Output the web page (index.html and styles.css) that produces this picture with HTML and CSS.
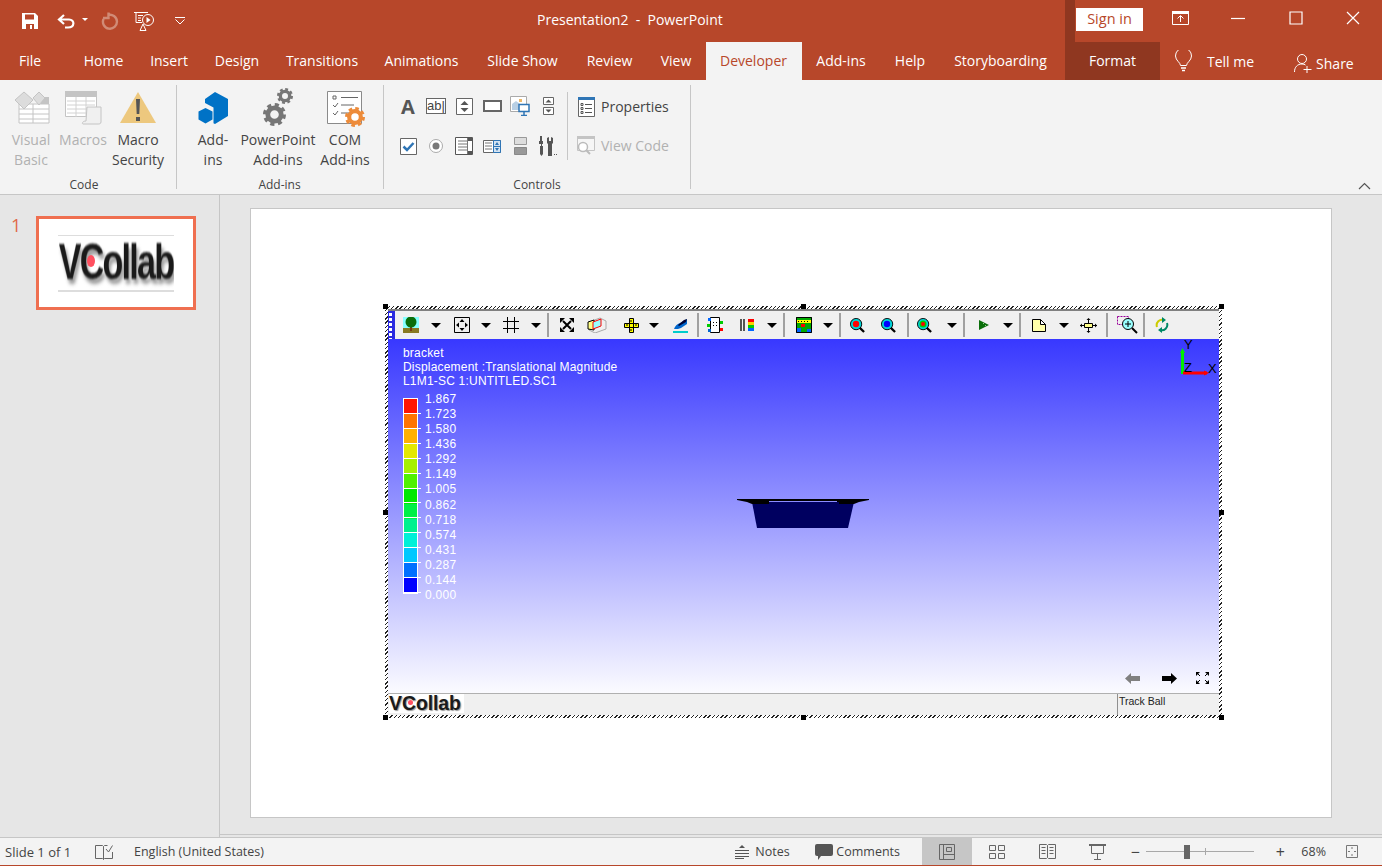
FILE: index.html
```html
<!DOCTYPE html>
<html lang="en">
<head>
    <meta charset="utf-8">
    <title>Presentation2 - PowerPoint</title>
    <meta name="viewport" content="width=device-width, initial-scale=1">
    <link rel="stylesheet" href="styles.css">
</head>
<body>
<svg class="defs" width="0" height="0">
    <symbol id="gear" viewBox="0 0 24 24">
        <circle cx="12" cy="12" r="7" fill="none" stroke="currentColor" stroke-width="5"/>
        <circle cx="12" cy="12" r="10" fill="none" stroke="currentColor" stroke-width="4" stroke-dasharray="4.2 3.65"/>
    </symbol>
    <symbol id="mag" viewBox="0 0 16 16">
        <path d="M10 10l5 5" stroke="#000" stroke-width="2.4"/>
        <circle cx="6.5" cy="6.5" r="6" fill="#00d8d8" stroke="#000"/>
    </symbol>
</svg>

<header class="titlebar">
    <div class="qat">
        <svg class="qat-save" width="16" height="16" viewBox="0 0 16 16"><path fill="#fff" d="M0 0h13l3 3v13H0z"/><path fill="#b7472a" d="M3 1.500h9v5H3zM4 11h8v5H4z"/><path fill="#fff" d="M8 12h2v4H8z"/></svg>
        <svg class="qat-undo" width="19" height="16" viewBox="0 0 19 16"><path fill="none" stroke="#fff" stroke-width="2.200" d="M7 2L2 6.500 7 11M2 6.500h10c6 0 6 8-1 8H8"/></svg>
        <span class="qat-caret"></span>
        <svg class="qat-redo" width="18" height="18" viewBox="0 0 18 18"><path fill="none" stroke="#d18b76" stroke-width="2.400" d="M7 3a7 7 0 1 1-4.500 4M7.500 .500v5.500H2"/></svg>
        <svg class="qat-show" width="21" height="20" viewBox="0 0 21 20"><path fill="none" stroke="#fff" d="M0 1.500h14M2 1.500v10h6M4 4.500h5M4 7h3M4 9.500h3M6 19.500h6M9 13l-3 6.500M9 13l3 6.500"/><circle cx="14" cy="9" r="5.500" fill="none" stroke="#fff"/><path fill="#fff" d="M12.500 6l4 3-4 3z"/></svg>
        <svg class="qat-more" width="10" height="8" viewBox="0 0 10 8"><path fill="none" stroke="#fff" d="M0 .500h10M.500 2.500L5 7l4.500-4.500"/></svg>
    </div>
    <div class="doc-title">Presentation2&nbsp; - &nbsp;PowerPoint</div>
    <button class="signin">Sign in</button>
    <div class="win-btns">
        <svg class="win-ribbon" width="17" height="14" viewBox="0 0 17 14"><path fill="none" stroke="#fff" d="M.500 2.500h16v11H.500zM5.500 7.500L8.500 4.500l3 3M8.500 5v6"/><path fill="#fff" d="M0 0h17v3H0z"/></svg>
        <svg class="win-min" width="14" height="14" viewBox="0 0 14 14"><path stroke="#fff" stroke-width="1.200" d="M0 7.500h14"/></svg>
        <svg class="win-max" width="14" height="14" viewBox="0 0 14 14"><path fill="none" stroke="#fff" stroke-width="1.200" d="M1 1h12v12H1z"/></svg>
        <svg class="win-close" width="14" height="14" viewBox="0 0 14 14"><path stroke="#fff" stroke-width="1.200" d="M1 1l12 12M13 1L1 13"/></svg>
    </div>
</header>

<nav class="tabs">
    <div class="tab-list">
        <span class="tab tab-file">File</span>
        <span class="tab">Home</span>
        <span class="tab">Insert</span>
        <span class="tab">Design</span>
        <span class="tab">Transitions</span>
        <span class="tab">Animations</span>
        <span class="tab">Slide Show</span>
        <span class="tab">Review</span>
        <span class="tab">View</span>
        <span class="tab active">Developer</span>
        <span class="tab">Add-ins</span>
        <span class="tab">Help</span>
        <span class="tab">Storyboarding</span>
    </div>
    <span class="tab-format">Format</span>
    <span class="tellme">
        <svg width="17" height="22" viewBox="0 0 17 22"><path fill="none" stroke="#fff" d="M5.500 15.500c0-3-5-5-5-9.500a8 8 0 0 1 16 0c0 4.500-5 6.500-5 9.500z"/><path stroke="#fff" stroke-width="1.500" d="M6 18h5M7 20.500h3"/></svg>
        <span>Tell me</span>
    </span>
    <span class="share">
        <svg width="18" height="20" viewBox="0 0 18 20"><circle cx="8" cy="6" r="4.500" fill="none" stroke="#fff"/><path fill="none" stroke="#fff" d="M.500 19c0-5 3-8 7.500-8 1.500 0 2.500.4 3.500 1M13 13v7M9.500 16.500h8"/></svg>
        <span>Share</span>
    </span>
</nav>

<section class="ribbon">
    <div class="group group-code">
        <div class="group-body">
            <div class="big-btn btn-vb disabled">
                <div class="big-icon">
                    <svg width="37" height="33" viewBox="0 0 37 33"><path fill="#fff" stroke="#c4c4c4" d="M6 13h30v19H6z"/><path fill="#c4c4c4" d="M28 6h8v7h-8z"/><path stroke="#c4c4c4" d="M6 18h30M6 23h30M6 28h30M20 13v19"/><path fill="#dcdcdc" stroke="#c4c4c4" d="M11 1l9 8-9 9-9-9zM26 1l6 6-6 7-6-7z"/></svg>
                </div>
                <span>Visual<br>Basic</span>
            </div>
            <div class="big-btn btn-macros disabled">
                <div class="big-icon">
                    <svg width="37" height="34" viewBox="0 0 37 34"><path fill="#fff" stroke="#c4c4c4" d="M.500.500h31v25H.500z"/><path fill="#c4c4c4" d="M0 0h32v6H0z"/><path stroke="#d2d2d2" d="M2 10h28M2 14h28M2 18h28M2 22h20M11 6v20M21 6v20"/><path fill="#f0f0f0" stroke="#c4c4c4" d="M22 16h14v15c0 2-2 2-3 2H18c-1 0-1-3 3-3z"/></svg>
                </div>
                <span>Macros</span>
            </div>
            <div class="big-btn btn-security">
                <div class="big-icon">
                    <svg width="36" height="32" viewBox="0 0 36 32"><path fill="#edc87e" d="M18 0l18 31H0z"/><path fill="#555" d="M16 7h4l-.7 15h-2.600zM16 25h4v4h-4z"/></svg>
                </div>
                <span>Macro<br>Security</span>
            </div>
        </div>
        <div class="group-label">Code</div>
    </div>
    <div class="group group-addins">
        <div class="group-body">
            <div class="big-btn btn-addins">
                <div class="big-icon">
                    <svg width="31" height="32" viewBox="0 0 31 32"><path fill="#0072c6" d="M17 0l13 7v17l-13 8-1.500-.8V15.500L7 11V7z"/><path fill="#0072c6" d="M7.500 16l7 3.500v8l-7 4-7-4v-8z"/></svg>
                </div>
                <span>Add-<br>ins</span>
            </div>
            <div class="big-btn btn-ppt">
                <div class="big-icon">
                    <svg class="gear-big" width="23" height="23"><use href="#gear"/></svg>
                    <svg class="gear-small" width="16" height="16"><use href="#gear"/></svg>
                </div>
                <span>PowerPoint<br>Add-ins</span>
            </div>
            <div class="big-btn btn-com">
                <div class="big-icon">
                    <svg width="36" height="33" viewBox="0 0 36 33"><path fill="#fff" stroke="#8a8a8a" d="M.500.500h34v32H.500z"/><path fill="none" stroke="#666" d="M6 5h3v3H6zM14 6.500h17M14 14h13M14 22h8M6 14l2 2 3-4M6 22l2 2 3-4"/></svg>
                    <svg class="gear-orange" width="20" height="20"><use href="#gear"/></svg>
                </div>
                <span>COM<br>Add-ins</span>
            </div>
        </div>
        <div class="group-label">Add-ins</div>
    </div>
    <div class="group group-controls">
        <div class="group-body">
            <div class="ctl-grid">
                <span class="ctl ctl-a">A</span>
                <span class="ctl"><span class="ctl-ab">ab|</span></span>
                <span class="ctl"><svg width="17" height="17" viewBox="0 0 17 17"><path fill="#fff" stroke="#666" d="M.500.500h16v16H.500z"/><path fill="#555" d="M8.500 3l4 4h-8zM8.500 14l-4-4h8z"/></svg></span>
                <span class="ctl"><svg width="19" height="12" viewBox="0 0 19 12"><path fill="#fff" stroke="#666" stroke-width="2" d="M1 1h17v10H1z"/></svg></span>
                <span class="ctl"><svg width="20" height="20" viewBox="0 0 20 20"><path fill="#fff" stroke="#aaa" d="M.500.500h16v15H.500z"/><path fill="#b8cfe4" d="M2 14V8l4-3 4 3v6z"/><path fill="#edb868" d="M9 3h3v3H9z"/><path fill="#fff" stroke="#2f75b5" stroke-width="1.500" d="M9 8.500h10v7H9z"/><path stroke="#2f75b5" stroke-width="1.500" d="M14 16v3M11 19.500h6"/></svg></span>
                <span class="ctl"><svg width="11" height="18" viewBox="0 0 11 18"><path fill="#fff" stroke="#666" d="M.500.500h10v7H.500zM.500 10.500h10v7H.500z"/><path fill="#555" d="M5.500 2.500l3 3h-6zM5.500 15.500l-3-3h6z"/></svg></span>
                <span class="ctl"><svg width="17" height="17" viewBox="0 0 17 17"><path fill="#fff" stroke="#666" d="M.500.500h16v16H.500z"/><path fill="none" stroke="#2f75b5" stroke-width="2.500" d="M3.500 8.500l3.500 3.500 6.500-7"/></svg></span>
                <span class="ctl"><svg width="14" height="14" viewBox="0 0 14 14"><circle cx="7" cy="7" r="6.500" fill="#fff" stroke="#aaa"/><circle cx="7" cy="7" r="3.500" fill="#777"/></svg></span>
                <span class="ctl"><svg width="18" height="18" viewBox="0 0 18 18"><path fill="#fff" stroke="#555" d="M.500.500h17v17H.500z"/><path stroke="#777" d="M3 4h9M3 7h9M3 10h9M3 13h9M12.500 1v16"/><path fill="#555" d="M13 1h4v3h-4zM13 14h4v3h-4z"/></svg></span>
                <span class="ctl"><svg width="18" height="13" viewBox="0 0 18 13"><path fill="#fff" stroke="#666" d="M.500.500h17v12H.500z"/><path stroke="#777" d="M2 3h7M2 6h7M2 9h7"/><path fill="#d6e4f2" stroke="#2f75b5" d="M10.500.500h7v12h-7zM10.500 6.500h7"/><path fill="#2f75b5" d="M14 2l2 3h-4zM14 11l-2-3h4z"/></svg></span>
                <span class="ctl"><svg width="13" height="18" viewBox="0 0 13 18"><path fill="#ddd" stroke="#999" d="M.500.500h12v7H.500z"/><path fill="#999" stroke="#888" d="M.500 10.500h12v7H.500z"/></svg></span>
                <span class="ctl"><svg width="20" height="20" viewBox="0 0 20 20"><path fill="#555" d="M2 0h2v5h1v3H4v2h1v8l-1.500 2L2 18v-8h1V8H1V5h1zM9 2l2-1v4h2V1l2 1v5l-1 1v12h-4V8L9 7z"/><path fill="#555" d="M16 18h1v1h-1zM18 18h1v1h-1z"/></svg></span>
            </div>
            <div class="ctl-side">
                <div class="side-btn">
                    <svg width="19" height="20" viewBox="-1 0 19 20"><path fill="#fff" stroke="#666" d="M.500.500h16v19H.500z"/><path fill="#2f75b5" d="M0 0h17v3H0z"/><path fill="none" stroke="#555" d="M3 6.500h2v2H3zM3 10.500h2v2H3zM3 14.500h2v2H3zM7 7.500h7M7 11.500h7M7 15.500h7"/></svg>
                    <span>Properties</span>
                </div>
                <div class="side-btn disabled">
                    <svg width="19" height="19" viewBox="0 0 19 19"><path fill="#f6f6f6" stroke="#c4c4c4" d="M.500.500h17v14H.500z"/><path fill="#c4c4c4" d="M0 0h18v3H0z"/><circle cx="6" cy="11" r="4.500" fill="#fff" stroke="#bbb" stroke-width="1.500"/><path stroke="#bbb" stroke-width="2" d="M9 14l4 4"/></svg>
                    <span>View Code</span>
                </div>
            </div>
        </div>
        <div class="group-label">Controls</div>
    </div>
    <svg class="ribbon-collapse" width="13" height="8" viewBox="0 0 13 8"><path fill="none" stroke="#555" stroke-width="1.200" d="M1 7l5.500-5.500L12 7"/></svg>
</section>

<main class="workspace">
    <aside class="sidebar">
        <span class="slide-num">1</span>
        <div class="thumb">
            <div class="logo logo-thumb">
                <span class="logo-text">VCollab</span>
                <i class="logo-dot"></i>
            </div>
        </div>
    </aside>
    <div class="stage">
        <div class="slide">
            <div class="ole">
                <div class="ole-inner">
                    <div class="viewer-tools">
                        <div class="gripper"></div>
                        <div class="tool-row">
                            <svg width="16" height="16" viewBox="0 0 16 16"><path fill="#8ff" d="M0 0h16v12H0z"/><path fill="#887a22" d="M0 11h16v5H0z"/><path fill="#7a3a12" d="M7 7h2v7H7z"/><circle cx="8" cy="5" r="5.500" fill="#0a6e0a"/></svg>
                            <i class="caret"></i>
                            <svg width="16" height="16" viewBox="0 0 16 16"><path fill="none" stroke="#000" d="M.500.500h15v15H.500z"/><path fill="#000" d="M8 2l2.500 3h-5zM8 14l-2.500-3h5zM2 8l3-2.500v5zM14 8l-3 2.500v-5z"/></svg>
                            <i class="caret"></i>
                            <svg width="16" height="16" viewBox="0 0 16 16"><path stroke="#000" d="M0 4.500h16M0 11.500h16M4.500 0v16M11.500 0v16"/></svg>
                            <i class="caret"></i>
                            <i class="tool-sep"></i>
                            <svg width="14" height="14" viewBox="0 0 14 14"><path stroke="#000" stroke-width="2" d="M3 3l8 8M11 3l-8 8"/><path fill="#000" d="M0 0h5L0 5zM14 0v5L9 0zM0 14V9l5 5zM14 14H9l5-5z"/></svg>
                            <svg width="20" height="16" viewBox="0 0 20 16"><path fill="none" stroke="#aaa" d="M2 5l11-4 6 3v8l-11 4-6-3z"/><path fill="#ff8" stroke="#000" d="M1 5l6-2v10l-6-1z"/><path fill="#9ff" stroke="#f00" d="M6 5l8-3v7l-8 3z"/></svg>
                            <svg width="15" height="15" viewBox="0 0 15 15"><path fill="#ff0" stroke="#000" d="M.500 5.500h14v4H.500zM5.500.500h4v14h-4z"/><path stroke="#000" d="M3 6v2M12 6v2M6 3h2M6 12h2"/></svg>
                            <i class="caret"></i>
                            <svg width="15" height="15" viewBox="0 0 15 15"><path fill="#06c" d="M1 11c1-3 3-5 6-6l7-4v5l-6 4c-2 1-4 1-7 1z"/><path fill="#003" d="M5 7l6-5 3-1-1 3-7 4z"/><path fill="#0cc" d="M0 13h15v2H0z"/></svg>
                            <i class="tool-sep"></i>
                            <svg width="16" height="16" viewBox="0 0 16 16"><path fill="#fff" stroke="#000" d="M3.500 .500h9v15h-9z"/><path fill="#000" d="M6 5h1v1H6zM9 5h1v1H9zM6 8h1v1H6zM9 8h1v1H9z"/><path fill="#06f" d="M1 1h3v3H1z"/><path fill="#0c0" d="M0 7h3v3H0zM13 4h3v3h-3z"/><path fill="#f00" d="M13 11h3v3h-3z"/><path fill="#06c" d="M1 12h3v3H1z"/></svg>
                            <svg width="16" height="16" viewBox="0 0 16 16"><path stroke="#000" stroke-width="1.300" d="M2 2v12M5 2v12"/><path fill="#f00" d="M9 2h6v3H9z"/><path fill="#fc0" d="M9 5h6v3H9z"/><path fill="#0c0" d="M9 8h6v3H9z"/><path fill="#06f" d="M9 11h6v3H9z"/></svg>
                            <i class="caret"></i>
                            <i class="tool-sep"></i>
                            <svg width="16" height="16" viewBox="0 0 16 16"><path fill="#0a0" d="M0 0h16v16H0z"/><path fill="#06f" d="M0 11h5v5H0zM11 12h5v4h-5z"/><path fill="#ff0" d="M0 3h16v3H0z"/><path fill="#f00" d="M5 7h4v3H5z"/><path fill="#000" d="M2 4h1v1H2zM5 4h1v1H5zM8 4h1v1H8zM11 4h1v1h-1z"/><path fill="none" stroke="#000" d="M.500.500h15v15H.500z"/></svg>
                            <i class="caret"></i>
                            <i class="tool-sep"></i>
                            <svg width="15" height="15"><use href="#mag"/><circle cx="6" cy="6" r="3.200" fill="#f00"/></svg>
                            <svg width="15" height="15"><use href="#mag"/><circle cx="6" cy="6" r="3.200" fill="#00f"/></svg>
                            <i class="tool-sep"></i>
                            <svg width="15" height="15"><use href="#mag"/><circle cx="6" cy="6" r="3.500" fill="#0c0"/><circle cx="6" cy="6" r="2" fill="#f00"/></svg>
                            <i class="caret"></i>
                            <i class="tool-sep"></i>
                            <svg width="10" height="10" viewBox="0 0 10 10"><path fill="#0a6e0a" d="M0 0l10 5-10 5z"/><path fill="#9c9" d="M4 3h1v1H4zM6 5h1v1H6z"/></svg>
                            <i class="caret"></i>
                            <i class="tool-sep"></i>
                            <svg width="14" height="13" viewBox="0 0 14 13"><path fill="#ffa" stroke="#000" d="M.500.500h8l5 5v7H.500z"/><path fill="#fff" stroke="#000" d="M8.500.500v5h5z"/></svg>
                            <i class="caret"></i>
                            <svg width="17" height="15" viewBox="0 0 17 15"><path fill="#ff8" stroke="#000" d="M4.500 5.500h8v4h-8z"/><path stroke="#000" d="M0 7.500h4M13 7.500h4M8.500 1v4M8.500 10v4"/><path fill="#000" d="M8.500 0l2 2h-4zM8.500 15l-2-2h4zM0 7.500l2-2v4zM17 7.500l-2 2v-4z"/></svg>
                            <i class="tool-sep"></i>
                            <svg width="21" height="18" viewBox="0 0 21 18"><path fill="none" stroke="#909" stroke-dasharray="2 1" d="M.500.500h11v8h-11z"/><path stroke="#000" stroke-width="2" d="M15 12l5 5"/><circle cx="11" cy="8" r="5.500" fill="#9ff" stroke="#000"/><path stroke="#000" d="M11 5v6M8 8h6"/></svg>
                            <i class="tool-sep"></i>
                            <svg width="14" height="16" viewBox="0 0 14 16"><path fill="none" stroke="#cc0" stroke-width="2" d="M2 10a5.500 5.500 0 0 1 7-7"/><path fill="none" stroke="#086" stroke-width="2" d="M12 6a5.500 5.500 0 0 1-7 7"/><path fill="#086" d="M7 0l4 3-4 3zM7 10v6l-4-3z"/></svg>
                        </div>
                    </div>
                    <div class="viewer">
                        <div class="viewer-info">
                            <div>bracket</div>
                            <div>Displacement :Translational Magnitude</div>
                            <div>L1M1-SC 1:UNTITLED.SC1</div>
                        </div>
                        <div class="legend">
                            <div class="legend-bar">
                                <i></i><i></i><i></i><i></i><i></i><i></i><i></i><i></i><i></i><i></i><i></i><i></i><i></i>
                            </div>
                            <div class="legend-vals">
                                <span>1.867</span><span>1.723</span><span>1.580</span><span>1.436</span><span>1.292</span><span>1.149</span><span>1.005</span><span>0.862</span><span>0.718</span><span>0.574</span><span>0.431</span><span>0.287</span><span>0.144</span><span>0.000</span>
                            </div>
                        </div>
                        <svg class="triad" width="42" height="42" viewBox="0 0 42 42">
                            <path stroke="#00f000" stroke-width="3" d="M5.500 12v23"/>
                            <path stroke="#f00" stroke-width="3" d="M6 34h24"/>
                            <path fill="#f00" d="M32 34l-5-2.500v5z"/>
                            <path fill="#00f000" d="M5.500 9l-2.500 5h5z"/>
                            <text x="7" y="10">Y</text>
                            <text x="7" y="33">Z</text>
                            <text x="31" y="34">X</text>
                        </svg>
                        <svg class="bracket" width="132" height="29" viewBox="0 0 132 29">
                            <path fill="#000060" d="M15 3h102l-6 26H20z"/>
                            <path fill="#000" d="M0 0h132v1l-5 1-5 1-5 2H102V3H32v2H15l-5-2-5-1-5-1z"/>
                            <path fill="#8c8cff" d="M32 2h68v1H32z"/>
                        </svg>
                        <div class="nav-arrows">
                            <svg class="nav-back" width="15" height="11" viewBox="0 0 15 11"><path fill="#808080" d="M0 5.500L6 0v3h9v5H6v3z"/></svg>
                            <svg width="15" height="11" viewBox="0 0 15 11"><path fill="#000" d="M15 5.500L9 0v3H0v5h9v3z"/></svg>
                            <svg width="13" height="12" viewBox="0 0 13 12"><path fill="#000" d="M0 0h4L0 4zM13 0v4L9 0zM0 12V8l4 4zM13 12H9l4-4z"/><path stroke="#000" d="M1 1l3 3M12 1L9 4M1 11l3-3M12 11L9 8"/></svg>
                        </div>
                    </div>
                    <div class="viewer-status">
                        <div class="logo logo-strip">
                            <span class="logo-text">VCollab</span>
                            <i class="logo-dot"></i>
                        </div>
                        <div class="mode-cell">Track Ball</div>
                    </div>
                </div>
                <i class="handle h-tl"></i><i class="handle h-tc"></i><i class="handle h-tr"></i>
                <i class="handle h-ml"></i><i class="handle h-mr"></i>
                <i class="handle h-bl"></i><i class="handle h-bc"></i><i class="handle h-br"></i>
            </div>
        </div>
    </div>
</main>

<footer class="statusbar">
    <span class="st-slide">Slide 1 of 1</span>
    <svg class="st-proof" width="18" height="16" viewBox="0 0 18 16"><path fill="none" stroke="#666" d="M.500 1.500h7l1 1v13l-1-1h-7zM8.500 2.500l1-1h3M17.500 8v6.500h-8l-1 1M11 5l2.500 3 4-6.500"/></svg>
    <span class="st-lang">English (United States)</span>
    <div class="st-right">
        <span class="st-notes">
            <svg width="14" height="14" viewBox="0 0 14 14"><path fill="#555" d="M7 0l3 3H4z"/><path stroke="#555" d="M0 5.500h14M0 8.500h14M0 11.500h14"/><path stroke="#555" d="M0 13.500h9"/></svg>
            Notes
        </span>
        <span class="st-comments">
            <svg width="18" height="16" viewBox="0 0 18 16"><path fill="#555" d="M2 0h14a2 2 0 0 1 2 2v8a2 2 0 0 1-2 2H6l-3 4v-4H2a2 2 0 0 1-2-2V2a2 2 0 0 1 2-2z"/></svg>
            Comments
        </span>
        <div class="views">
            <span class="view active"><svg width="16" height="16" viewBox="0 0 16 16"><path fill="none" stroke="#666" d="M.500.500h15v15H.500zM4.500.500v15M4.500 10.500h11M7.500 3.500h5v4h-5z"/></svg></span>
            <span class="view"><svg width="16" height="14" viewBox="0 0 16 14"><path fill="none" stroke="#666" d="M.500.500h6v5h-6zM9.500.500h6v5h-6zM.500 8.500h6v5h-6zM9.500 8.500h6v5h-6z"/></svg></span>
            <span class="view"><svg width="17" height="15" viewBox="0 0 17 15"><path fill="none" stroke="#666" d="M.500.500h7l1 1 1-1h7v14h-7l-1-1-1 1h-7zM8.500 1.500v12M2.500 3.500h4M2.500 6.500h4M2.500 9.500h4M10.500 3.500h4M10.500 6.500h4M10.500 9.500h4"/></svg></span>
            <span class="view"><svg width="17" height="16" viewBox="0 0 17 16"><path fill="none" stroke="#666" d="M2.500 1.500v8h12v-8M8.500 9.500v6M5 15.500h7"/><path stroke="#666" stroke-width="2" d="M0 1h17"/></svg></span>
        </div>
        <div class="zoom">
            <span class="zoom-sign">−</span>
            <div class="zoom-track"><i class="zoom-mid"></i><i class="zoom-thumb"></i></div>
            <span class="zoom-sign">+</span>
        </div>
        <span class="st-pct">68%</span>
        <svg class="st-fit" width="12" height="13" viewBox="0 0 12 13"><path fill="none" stroke="#777" d="M.500.500h11v12H.500z"/><path stroke="#777" d="M6 2v2M6 9v2M2 6.500h2M8 6.500h2"/></svg>
    </div>
</footer>
</body>
</html>
```

FILE: styles.css
```css
* {
    box-sizing: border-box;
}

body {
    margin: 0;
    width: 1382px;
    height: 866px;
    overflow: hidden;
    background: #e6e6e6;
    color: #444;
    font-family: "Open Sans", "Liberation Sans", sans-serif;
    font-size: 14px;
}

.defs {
    position: absolute;
}

/* title bar */
.titlebar {
    display: flex;
    align-items: center;
    height: 42px;
    background: #b7472a;
    color: #fff;
}

.qat {
    display: flex;
    align-items: center;
    width: 537px;
    padding-left: 22px;
}

.qat-undo {
    margin-left: 19px;
}

.qat-caret {
    margin-left: 6px;
    border-top: 3px solid #fff;
    border-left: 3px solid transparent;
    border-right: 3px solid transparent;
    margin-bottom: 4px;
}

.qat-redo {
    margin-left: 13px;
}

.qat-show {
    margin-left: 15px;
}

.qat-more {
    margin-left: 20px;
}

.doc-title {
    width: 539px;
    margin-bottom: 4px;
    font-size: 14px;
}

.signin {
    width: 67px;
    height: 23px;
    margin-bottom: 4px;
    padding: 0 0 2px;
    border: 0;
    background: #fff;
    color: #b7472a;
    font: inherit;
    font-size: 14.500px;
}

.win-btns {
    display: flex;
    align-items: center;
    margin-bottom: 6px;
}

.win-ribbon {
    margin-left: 29px;
}

.win-min {
    margin-left: 42px;
}

.win-max {
    margin-left: 44px;
}

.win-close {
    margin-left: 43px;
}

/* tabs */
.tabs {
    display: flex;
    align-items: stretch;
    height: 38px;
    background: #b7472a;
    color: #fff;
    font-size: 14px;
    line-height: 37px;
}

.tab-list {
    display: grid;
    grid-template-columns: 69.500px 68px 63px 73px 97px 102px 100px 74px 59px 96px 79px 59px 122px;
}

.tab {
    text-align: center;
    white-space: nowrap;
}

.tab-file {
    padding-left: 19px;
    text-align: left;
}

.tab.active {
    background: #f3f3f3;
    color: #b7472a;
}

.tab-format {
    position: relative;
    width: 95px;
    margin-left: 3.500px;
    background: #8f3720;
    text-align: center;
}

.tab-format::before {
    content: "";
    position: absolute;
    left: 0;
    top: -42px;
    width: 10px;
    height: 42px;
    background: #8f3720;
}

.tellme {
    display: flex;
    align-items: center;
    margin-left: 15px;
}

.tellme span {
    margin-left: 15px;
}

.share {
    display: flex;
    align-items: center;
    margin-left: 40px;
    padding-top: 4px;
}

.share span {
    margin-left: 4px;
}

/* ribbon */
.ribbon {
    position: relative;
    display: flex;
    height: 115px;
    padding-top: 5px;
    background: #f3f3f3;
    border-bottom: 1px solid #c6c6c6;
}

.group {
    height: 104px;
    border-right: 1px solid #c6c6c6;
}

.group-code {
    width: 177px;
}

.group-addins {
    width: 207px;
    padding-left: 11px;
}

.group-controls {
    width: 307px;
}

.group-body {
    display: flex;
    height: 92px;
}

.group-label {
    height: 12px;
    margin-top: 2px;
    font-size: 12px;
    line-height: 12px;
    text-align: center;
}

.group-code .group-label {
    padding-right: 8px;
}

.group-addins .group-label {
    padding-right: 12px;
}

.big-btn {
    display: flex;
    flex-direction: column;
    align-items: center;
    text-align: center;
    line-height: 20px;
}

.big-btn.disabled,
.side-btn.disabled {
    color: #b1b1b1;
}

.big-icon {
    position: relative;
    display: flex;
    align-items: center;
    justify-content: center;
    width: 100%;
    height: 45px;
}

.btn-vb,
.btn-macros {
    width: 52px;
}

.btn-vb {
    margin-left: 5px;
}

.btn-security {
    width: 58px;
}

.btn-addins {
    width: 50px;
}

.btn-ppt {
    width: 80px;
}

.btn-com {
    width: 54px;
}

.gear-big {
    position: absolute;
    left: 25px;
    top: 18px;
    color: #767676;
}

.gear-small {
    position: absolute;
    left: 39px;
    top: 3px;
    color: #767676;
}

.gear-orange {
    position: absolute;
    left: 27px;
    top: 22px;
    color: #ed8b3a;
}

.ctl-grid {
    display: grid;
    grid-template-columns: repeat(6, 28px);
    grid-auto-rows: 40px;
    width: 178px;
    padding: 1px 0 0 10px;
}

.ctl {
    display: flex;
    align-items: center;
    justify-content: center;
}

.ctl-a {
    font-size: 20px;
    font-weight: 700;
    color: #555;
}

.ctl-ab {
    width: 20px;
    height: 16px;
    border: 1px solid #666;
    background: #fff;
    font-family: "Liberation Sans", sans-serif;
    font-size: 13px;
    line-height: 14px;
    text-align: center;
}

.ctl-side {
    display: flex;
    flex-direction: column;
    justify-content: center;
    height: 68px;
    margin: 7px 0 0 5px;
    padding-left: 9px;
    border-left: 1px solid #c6c6c6;
}

.side-btn {
    display: flex;
    flex-shrink: 0;
    align-items: center;
    height: 39px;
    white-space: nowrap;
}

.side-btn span {
    margin-left: 5px;
}

.ribbon-collapse {
    position: absolute;
    right: 11px;
    bottom: 4px;
}

/* slide area */
.workspace {
    display: flex;
    height: 642px;
}

.sidebar {
    display: flex;
    align-items: flex-start;
    width: 220px;
    padding: 21px 0 0 11px;
    border-right: 1px solid #c6c6c6;
}

.slide-num {
    width: 25px;
    color: #e0694a;
    font-size: 18px;
    line-height: 18px;
}

.thumb {
    display: flex;
    align-items: center;
    justify-content: center;
    width: 160px;
    height: 94px;
    background: #fff;
    border: 3px solid #ef6f50;
}

.logo {
    position: relative;
    display: flex;
    align-items: center;
    overflow: hidden;
    background: #fff;
    color: #1a1a1a;
    font-family: "Liberation Sans", sans-serif;
    font-weight: 700;
}

.logo-thumb {
    justify-content: center;
    width: 116px;
    height: 57px;
    border-top: 1px solid #ddd;
    border-bottom: 2px solid #ddd;
    font-size: 34px;
    letter-spacing: -1.700px;
}

.logo-thumb .logo-text {
    transform: scaleY(1.450);
    filter: blur(0.700px);
    text-shadow: 2px 3px 3px #999;
}

.logo-strip {
    width: 75px;
    height: 19px;
    margin-left: 1px;
    overflow: visible;
    font-size: 19.500px;
    line-height: 19px;
    letter-spacing: -.1px;
}

.logo-strip .logo-text {
    text-shadow: 1px 1px 1px #999;
}

.logo-dot {
    position: absolute;
    left: 29px;
    top: 19px;
    width: 8px;
    height: 12px;
    border-radius: 50%;
    background: #ff5060;
}

.logo-strip .logo-dot {
    left: 19px;
    top: 6px;
    width: 5px;
    height: 5px;
}

.stage {
    flex: 1;
    height: 640px;
    padding: 13px 0 0 30px;
    border-bottom: 1px solid #c6c6c6;
}

.slide {
    position: relative;
    width: 1082px;
    height: 610px;
    background: #fff;
    border: 1px solid #c6c6c6;
}

/* embedded viewer, sits free on the slide */
.ole {
    position: absolute;
    left: 134px;
    top: 97px;
    width: 837px;
    height: 412px;
    padding: 3px;
    background: repeating-linear-gradient(135deg, #222 0 1px, #fff 1px 3px);
}

.ole-inner {
    display: flex;
    flex-direction: column;
    height: 100%;
    background: #f0f0f0;
    border-top: 2px solid #808080;
    font-family: "Liberation Sans", sans-serif;
}

.handle {
    position: absolute;
    width: 5px;
    height: 5px;
    background: #000;
}

.h-tl { left: -2px; top: -2px; }
.h-tc { left: 416px; top: -2px; }
.h-tr { right: -2px; top: -2px; }
.h-ml { left: -2px; top: 204px; }
.h-mr { right: -2px; top: 204px; }
.h-bl { left: -2px; bottom: -2px; }
.h-bc { left: 416px; bottom: -2px; }
.h-br { right: -2px; bottom: -2px; }

.viewer-tools {
    display: flex;
    height: 28px;
    flex-shrink: 0;
}

.gripper {
    width: 7px;
    background: repeating-linear-gradient(#fff 0 3px, transparent 3px 5px) 1px 2px / 3px 100% no-repeat, #2a2ae0;
}

.tool-row {
    display: grid;
    grid-template-columns:
        28px 23px 27px 22px 28px 16px 13px 27px 37px 25px 24px 24px
        10px 32px 28px 16px 13px 27px 16px 11px 31px 26px 10px 30px
        16px 16px 24px 16px 13px 27px 21px 26px 11px 26px 12px 20px;
    align-items: center;
    justify-items: start;
    padding-left: 8px;
}

.caret {
    width: 0;
    height: 0;
    margin-top: 1px;
    border-top: 5px solid #000;
    border-left: 5px solid transparent;
    border-right: 5px solid transparent;
}

.tool-sep {
    width: 2px;
    height: 24px;
    background: #a0a0a0;
}

.viewer {
    position: relative;
    flex: 1;
    background: linear-gradient(#3838ff, #fbfbff);
    color: #fff;
    font-size: 12px;
}

.viewer-info {
    padding: 7px 0 0 15px;
    line-height: 14px;
    letter-spacing: .2px;
}

.legend {
    display: flex;
    margin: 10px 0 0 15px;
}

.legend-bar {
    display: flex;
    flex-direction: column;
    width: 15px;
    height: 196px;
    border: 1px solid #fff;
    background: linear-gradient(#ff1400 0 7.700%, #ff7400 7.700% 15.400%, #ffb000 15.400% 23.100%, #e4e800 23.100% 30.800%, #a6f000 30.800% 38.500%, #50f000 38.500% 46.200%, #00e800 46.200% 53.900%, #00f048 53.900% 61.600%, #00f090 61.600% 69.300%, #00f0d8 69.300% 77%, #00c8ff 77% 84.700%, #0070ff 84.700% 92.400%, #0000ff 92.400%);
}

.legend-bar i {
    position: relative;
    flex: 1;
    border-bottom: 1px solid #fff;
}

.legend-bar i::after {
    content: "";
    position: absolute;
    left: 13px;
    bottom: -1px;
    width: 4px;
    height: 1px;
    background: #fff;
}

.legend-vals {
    display: flex;
    flex-direction: column;
    margin: -6px 0 0 7px;
    letter-spacing: .3px;
}

.legend-vals span {
    height: 15.080px;
    line-height: 15px;
}

.triad {
    position: absolute;
    right: 0;
    top: 0;
    overflow: visible;
}

.triad text {
    fill: #000;
    font-size: 13px;
    font-family: "Liberation Sans", sans-serif;
}

.bracket {
    position: absolute;
    left: 349px;
    top: 160px;
}

.nav-arrows {
    position: absolute;
    right: 10px;
    bottom: 9px;
    display: flex;
    align-items: center;
    gap: 19px;
}

.nav-back {
    margin-right: 3px;
}

.viewer-status {
    display: flex;
    justify-content: space-between;
    height: 22px;
    flex-shrink: 0;
    border-top: 1px solid #b0b0b0;
}

.mode-cell {
    width: 102px;
    padding-left: 1px;
    border-left: 1px solid #909090;
    color: #222;
    font-size: 10.500px;
    line-height: 14px;
}

/* status bar */
.statusbar {
    display: flex;
    align-items: center;
    height: 29px;
    padding-left: 5px;
    background: #f3f3f3;
    border-top: 1px solid #c6c6c6;
    border-bottom: 1px solid #b7472a;
    font-size: 12.500px;
}

.st-slide {
    width: 90px;
    font-size: 13px;
}

.st-proof {
    margin-right: 21px;
}

.st-right {
    display: flex;
    align-items: center;
    margin-left: auto;
    height: 100%;
}

.st-notes {
    display: flex;
    align-items: center;
    gap: 6px;
    width: 80px;
}

.st-comments {
    display: flex;
    align-items: center;
    gap: 3px;
    width: 107px;
}

.views {
    display: flex;
    height: 100%;
}

.view {
    display: flex;
    align-items: center;
    justify-content: center;
    width: 50px;
}

.view.active {
    background: #c6c6c6;
}

.zoom {
    display: flex;
    align-items: center;
    margin-left: 7px;
    font-size: 16px;
}

.zoom-sign {
    width: 12px;
    text-align: center;
}

.zoom-track {
    position: relative;
    width: 108px;
    height: 1px;
    margin: 0 20px 0 5px;
    background: #a8a8a8;
}

.zoom-mid {
    position: absolute;
    left: 59px;
    top: -3px;
    width: 1px;
    height: 7px;
    background: #a8a8a8;
}

.zoom-thumb {
    position: absolute;
    left: 38px;
    top: -6px;
    width: 6px;
    height: 14px;
    background: #666;
}

.st-pct {
    margin-left: 15px;
}

.st-fit {
    margin: 0 24px 0 20px;
}
```
